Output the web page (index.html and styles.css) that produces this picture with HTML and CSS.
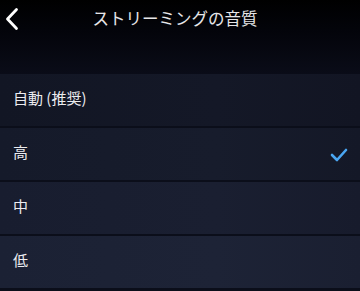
FILE: index.html
```html
<!DOCTYPE html>
<html lang="ja">
<head>
<meta charset="utf-8">
<link rel="stylesheet" href="styles.css">
</head>
<body>
<div class="screen">
  <header class="header">
    <svg class="back" width="16" height="24" viewBox="0 0 16 24"><path d="M12.5 2.5 L3.5 12 L12.5 21.5" fill="none" stroke="#ffffff" stroke-width="2.8" stroke-linecap="round" stroke-linejoin="round"/></svg>
    <h1 class="title">ストリーミングの音質</h1>
  </header>
  <ul class="list">
    <li class="row"><span class="label">自動 (推奨)</span></li>
    <li class="row"><span class="label">高</span><svg class="check" width="18" height="14" viewBox="0 0 18 14"><path d="M2 7 L7 12 L16 2" fill="none" stroke="#4aa6f2" stroke-width="2.6" stroke-linecap="round" stroke-linejoin="round"/></svg></li>
    <li class="row"><span class="label">中</span></li>
    <li class="row"><span class="label">低</span></li>
  </ul>
</div>
</body>
</html>
```
FILE: styles.css
```css
html, body {
  margin: 0;
  padding: 0;
  background: #0b0e1a;
}
.screen {
  width: 360px;
  height: 291px;
  overflow: hidden;
  font-family: "Noto Sans CJK JP", "Noto Sans", sans-serif;
  background: #0b0e1a;
}
.header {
  height: 74px;
  position: relative;
  background: linear-gradient(180deg, #000000 0%, #03040a 40%, #0a0c18 100%);
}
.back {
  position: absolute;
  left: 4px;
  top: 7px;
}
.title {
  margin: 0;
  padding: 6px 10px 0 0;
  text-align: center;
  font-size: 16.5px;
  font-weight: 400;
  line-height: 24px;
  color: #e6e6e8;
}
.list {
  list-style: none;
  margin: 0;
  padding: 0;
  display: flex;
  flex-direction: column;
  gap: 2px;
}
.row {
  height: 52px;
  box-sizing: border-box;
  display: flex;
  align-items: center;
  justify-content: space-between;
  padding: 0 12px 4px 13px;
  font-size: 15px;
  color: #ececf0;
}
.label {
  line-height: 20px;
}
.row:nth-child(1) { background: linear-gradient(90deg, #121624 0%, #141827 60%, #121523 100%); }
.row:nth-child(2) { background: linear-gradient(90deg, #151a2a 0%, #171c2c 60%, #141827 100%); }
.row:nth-child(3) { background: linear-gradient(90deg, #181d2f 0%, #1a1f31 60%, #171b2c 100%); }
.row:nth-child(4) { background: linear-gradient(90deg, #1b2134 0%, #1d2336 60%, #1a1f31 100%); }
.check {
  margin-top: 5px;
}
```
